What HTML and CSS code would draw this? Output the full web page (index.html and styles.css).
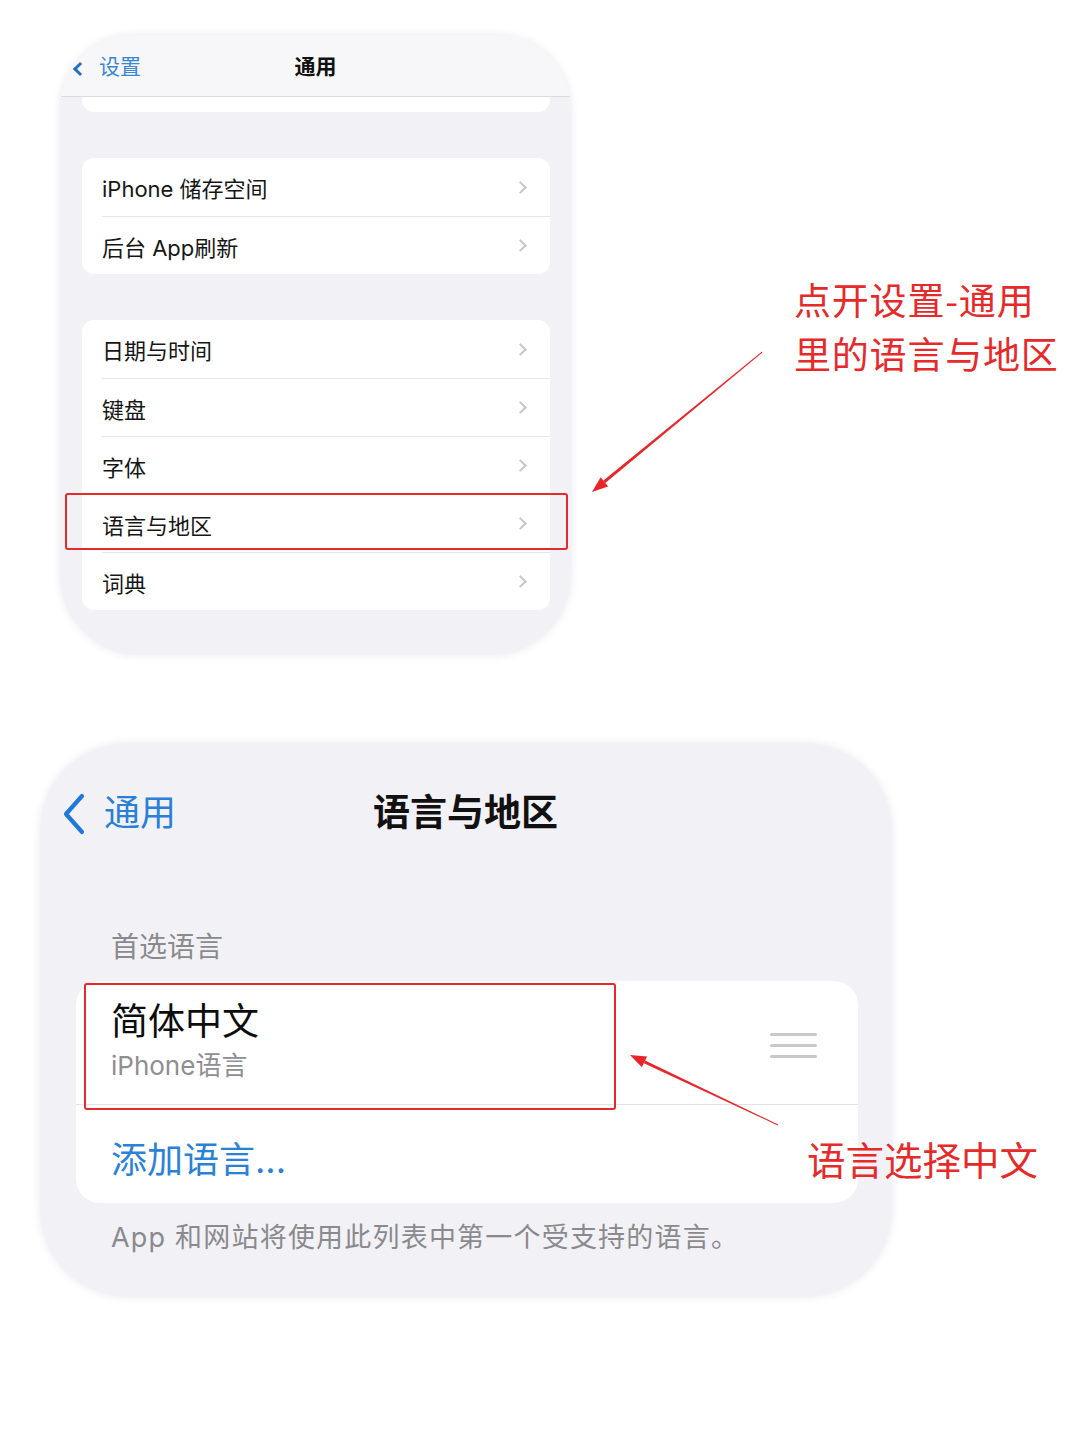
FILE: index.html
```html
<!DOCTYPE html>
<html lang="zh-CN">
<head>
<meta charset="utf-8">
<title>语言与地区</title>
<link rel="stylesheet" href="styles.css">
</head>
<body>
<div class="page">
  <section class="shot shot-one">
    <div class="nav1">
      <span class="back1"><span class="chev-small"></span>设置</span>
      <span class="title1">通用</span>
    </div>
    <div class="strip"></div>
    <div class="card1">
      <div class="row1"><span>iPhone 储存空间</span><span class="chev"></span></div>
      <div class="row1"><span>后台 App刷新</span><span class="chev"></span></div>
    </div>
    <div class="card1 second">
      <div class="row1"><span>日期与时间</span><span class="chev"></span></div>
      <div class="row1"><span>键盘</span><span class="chev"></span></div>
      <div class="row1"><span>字体</span><span class="chev"></span></div>
      <div class="row1"><span>语言与地区</span><span class="chev"></span></div>
      <div class="row1"><span>词典</span><span class="chev"></span></div>
    </div>
  </section>

  <section class="shot shot-two">
    <div class="nav2">
      <span class="back2">
        <svg class="back-icon" width="26" height="42" viewBox="0 0 26 42"><path d="M21 3 L5 21 L21 39" fill="none" stroke="#1f78dc" stroke-width="4.2" stroke-linecap="round" stroke-linejoin="round"/></svg>
        <span>通用</span>
      </span>
      <span class="title2">语言与地区</span>
    </div>
    <div class="sect-head">首选语言</div>
    <div class="card2">
      <div class="lang-row">
        <div class="lang-text">
          <div class="lang-name">简体中文</div>
          <div class="lang-sub">iPhone语言</div>
        </div>
        <div class="handle"><i></i><i></i><i></i></div>
      </div>
      <div class="add-row">添加语言...</div>
    </div>
    <div class="foot">App 和网站将使用此列表中第一个受支持的语言。</div>
  </section>

  <div class="note note-one"><div>点开设置-通用</div><div>里的语言与地区</div></div>
  <div class="note note-two">语言选择中文</div>
  <div class="hl hl-one"></div>
  <div class="hl hl-two"></div>
  <svg class="arrows" width="1080" height="1440" viewBox="0 0 1080 1440">
    <polygon points="762,351.6 762.4,352.4 605.3,483.0 603.4,480.6" fill="#e8262a"/>
    <polygon points="592,492 608.2,486.4 600.6,477.2" fill="#e8262a"/>
    <polygon points="778.2,1124.6 777.8,1125.4 643.9,1063.2 645.1,1060.4" fill="#e8262a"/>
    <polygon points="630,1055 647.1,1056.4 641.9,1067.2" fill="#e8262a"/>
  </svg>
</div>
</body>
</html>
```
FILE: styles.css
```css
html, body {
  margin: 0;
  padding: 0;
  background: #ffffff;
}
body {
  font-family: "Inter", "Noto Sans CJK SC", "Noto Sans", sans-serif;
  color: #111;
}
.page {
  position: relative;
  width: 1080px;
  height: 1440px;
  padding-top: 35px;
  box-sizing: border-box;
}
.shot {
  background: #f2f2f6;
  overflow: hidden;
  box-shadow: 0 0 6px 2px rgba(240, 240, 244, 0.9);
}
.shot-one {
  margin-left: 60px;
  width: 511px;
  height: 620px;
  border-radius: 74px 74px 80px 80px;
  display: flex;
  flex-direction: column;
}
.nav1 {
  height: 61px;
  flex: none;
  background: #f7f7f9;
  border-bottom: 1px solid #dcdce0;
  position: relative;
  display: flex;
  align-items: center;
  justify-content: center;
}
.back1 {
  position: absolute;
  left: 15px;
  top: 18px;
  display: flex;
  align-items: center;
  font-size: 21px;
  line-height: 28px;
  color: #3a86d2;
}
.chev-small {
  width: 10px;
  height: 10px;
  border-left: 3px solid #2470c4;
  border-bottom: 3px solid #2470c4;
  transform: rotate(45deg);
  margin-right: 14px;
  margin-top: 4px;
  box-sizing: border-box;
}
.title1 {
  font-size: 21px;
  font-weight: 700;
  color: #111;
  line-height: 28px;
  margin-top: 2px;
}
.strip {
  height: 15px;
  margin: 0 21px 0 22px;
  background: #ffffff;
  border-radius: 0 0 12px 12px;
  flex: none;
}
.card1 {
  margin: 46px 21px 0 22px;
  background: #ffffff;
  border-radius: 12px;
  flex: none;
}
.card1.second {
  margin-top: 46px;
}
.row1 {
  height: 58px;
  margin-left: 20px;
  padding-right: 23px;
  display: flex;
  align-items: center;
  justify-content: space-between;
  font-size: 22px;
  color: #161616;
  border-top: 1px solid #e6e6ea;
  box-sizing: border-box;
}
.row1:first-child {
  border-top: none;
}
.chev {
  width: 9px;
  height: 9px;
  border-right: 2px solid #c6c6ca;
  border-top: 2px solid #c6c6ca;
  transform: rotate(45deg);
  box-sizing: border-box;
  margin-right: 2px;
}

.shot-two {
  margin-top: 88px;
  margin-left: 40px;
  width: 852px;
  height: 554px;
  border-radius: 88px;
  display: flex;
  flex-direction: column;
}
.nav2 {
  height: 140px;
  flex: none;
  position: relative;
  display: flex;
  align-items: center;
}
.back2 {
  display: flex;
  align-items: center;
  margin-left: 21px;
  color: #2a7fd8;
  font-size: 36px;
  line-height: 44px;
}
.back-icon {
  margin-right: 17px;
  margin-top: 2px;
}
.title2 {
  margin-left: 197px;
  font-size: 37px;
  font-weight: 700;
  color: #111;
  line-height: 44px;
}
.sect-head {
  margin: 46px 0 0 71px;
  font-size: 28px;
  line-height: 36px;
  color: #8a8a8e;
}
.card2 {
  margin: 16px 34px 0 36px;
  background: #ffffff;
  border-radius: 24px;
  height: 222px;
  display: flex;
  flex-direction: column;
}
.lang-row {
  height: 124px;
  flex: none;
  display: flex;
  justify-content: space-between;
  align-items: flex-start;
  border-bottom: 1px solid #e2e2e6;
  box-sizing: border-box;
  padding: 19px 41px 0 35px;
}
.lang-name {
  font-size: 37px;
  line-height: 44px;
  color: #0d0d0d;
}
.lang-sub {
  margin-top: 5px;
  font-size: 26px;
  line-height: 34px;
  color: #8e8e93;
}
.handle {
  display: flex;
  flex-direction: column;
  gap: 8px;
  margin-top: 33px;
}
.handle i {
  display: block;
  width: 47px;
  height: 3px;
  background: #c9c9cd;
  border-radius: 2px;
}
.add-row {
  flex: 1;
  display: flex;
  align-items: center;
  padding-left: 35px;
  padding-top: 6px;
  font-size: 36px;
  color: #2a82d6;
}
.foot {
  margin: 17px 0 0 71px;
  font-size: 27px;
  letter-spacing: 1.2px;
  line-height: 36px;
  color: #8a8a8e;
}

.note {
  position: absolute;
  color: #e62a2a;
  font-family: "Noto Sans CJK SC", sans-serif;
  font-size: 37px;
  line-height: 54px;
}
.note-one {
  left: 794px;
  top: 272px;
  letter-spacing: 0.8px;
}
.note-two {
  left: 807px;
  top: 1131px;
  font-size: 38.5px;
}
.hl {
  position: absolute;
  border: 2.5px solid #e32a2d;
  border-radius: 3px;
  box-sizing: border-box;
}
.hl-one {
  left: 65px;
  top: 493px;
  width: 503px;
  height: 57px;
}
.hl-two {
  left: 84px;
  top: 983px;
  width: 532px;
  height: 127px;
}
.arrows {
  position: absolute;
  left: 0;
  top: 0;
  pointer-events: none;
}
```
